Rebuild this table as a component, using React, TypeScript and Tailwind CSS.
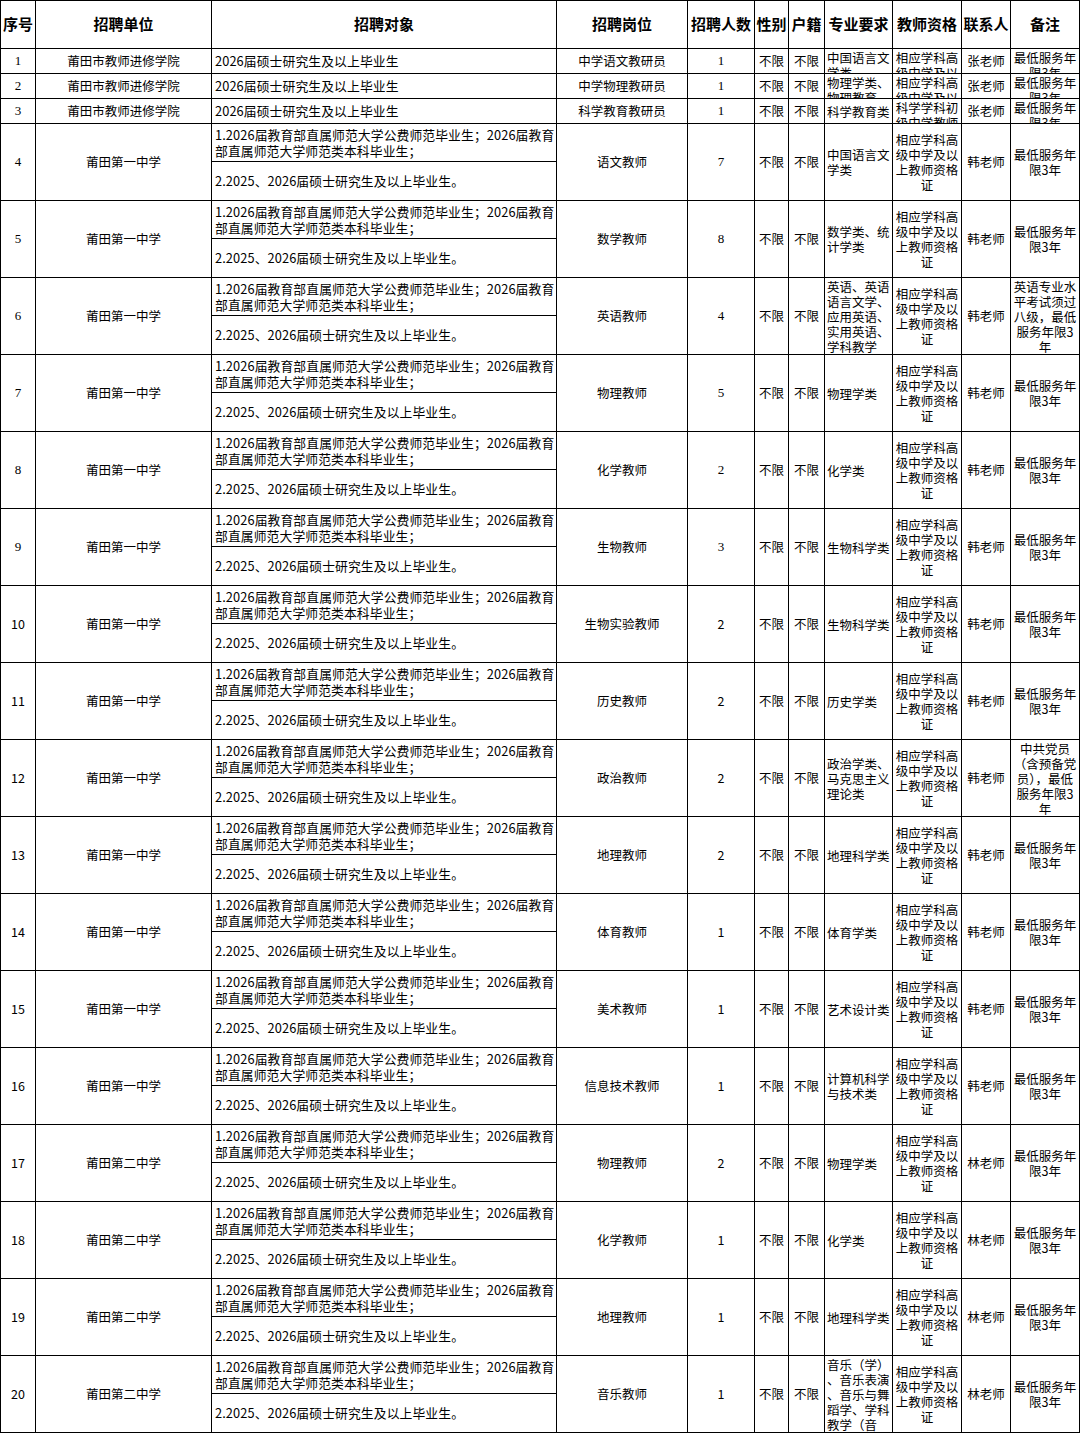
import clsx from 'clsx'

// column template shared by the header and every body row
const COLS =
  'grid grid-cols-[35px_176px_345px_131px_67px_34px_36px_68px_69px_49px_69px]'

interface Row {
  no: number
  unit: string
  target?: string // single-line target; otherwise the two-part text
  pos: string
  num: string
  major: string[]
  qual: string[]
  contact: string
  note: string[]
}

const QUAL = ['相应学科高', '级中学及以', '上教师资格', '证']
const NOTE = ['最低服务年', '限3年']

const rows: Row[] = [
  { no: 1, unit: '莆田市教师进修学院', target: '2026届硕士研究生及以上毕业生', pos: '中学语文教研员', num: '1', major: ['中国语言文', '学类'], qual: QUAL, contact: '张老师', note: NOTE },
  { no: 2, unit: '莆田市教师进修学院', target: '2026届硕士研究生及以上毕业生', pos: '中学物理教研员', num: '1', major: ['物理学类、', '物理教育'], qual: QUAL, contact: '张老师', note: NOTE },
  { no: 3, unit: '莆田市教师进修学院', target: '2026届硕士研究生及以上毕业生', pos: '科学教育教研员', num: '1', major: ['科学教育类'], qual: ['科学学科初', '级中学教师', '资格证'], contact: '张老师', note: NOTE },
  { no: 4, unit: '莆田第一中学', pos: '语文教师', num: '7', major: ['中国语言文', '学类'], qual: QUAL, contact: '韩老师', note: NOTE },
  { no: 5, unit: '莆田第一中学', pos: '数学教师', num: '8', major: ['数学类、统', '计学类'], qual: QUAL, contact: '韩老师', note: NOTE },
  { no: 6, unit: '莆田第一中学', pos: '英语教师', num: '4', major: ['英语、英语', '语言文学、', '应用英语、', '实用英语、', '学科教学'], qual: QUAL, contact: '韩老师', note: ['英语专业水', '平考试须过', '八级，最低', '服务年限3', '年'] },
  { no: 7, unit: '莆田第一中学', pos: '物理教师', num: '5', major: ['物理学类'], qual: QUAL, contact: '韩老师', note: NOTE },
  { no: 8, unit: '莆田第一中学', pos: '化学教师', num: '2', major: ['化学类'], qual: QUAL, contact: '韩老师', note: NOTE },
  { no: 9, unit: '莆田第一中学', pos: '生物教师', num: '3', major: ['生物科学类'], qual: QUAL, contact: '韩老师', note: NOTE },
  { no: 10, unit: '莆田第一中学', pos: '生物实验教师', num: '2', major: ['生物科学类'], qual: QUAL, contact: '韩老师', note: NOTE },
  { no: 11, unit: '莆田第一中学', pos: '历史教师', num: '2', major: ['历史学类'], qual: QUAL, contact: '韩老师', note: NOTE },
  { no: 12, unit: '莆田第一中学', pos: '政治教师', num: '2', major: ['政治学类、', '马克思主义', '理论类'], qual: QUAL, contact: '韩老师', note: ['中共党员', '（含预备党', '员），最低', '服务年限3', '年'] },
  { no: 13, unit: '莆田第一中学', pos: '地理教师', num: '2', major: ['地理科学类'], qual: QUAL, contact: '韩老师', note: NOTE },
  { no: 14, unit: '莆田第一中学', pos: '体育教师', num: '1', major: ['体育学类'], qual: QUAL, contact: '韩老师', note: NOTE },
  { no: 15, unit: '莆田第一中学', pos: '美术教师', num: '1', major: ['艺术设计类'], qual: QUAL, contact: '韩老师', note: NOTE },
  { no: 16, unit: '莆田第一中学', pos: '信息技术教师', num: '1', major: ['计算机科学', '与技术类'], qual: QUAL, contact: '韩老师', note: NOTE },
  { no: 17, unit: '莆田第二中学', pos: '物理教师', num: '2', major: ['物理学类'], qual: QUAL, contact: '林老师', note: NOTE },
  { no: 18, unit: '莆田第二中学', pos: '化学教师', num: '1', major: ['化学类'], qual: QUAL, contact: '林老师', note: NOTE },
  { no: 19, unit: '莆田第二中学', pos: '地理教师', num: '1', major: ['地理科学类'], qual: QUAL, contact: '林老师', note: NOTE },
  { no: 20, unit: '莆田第二中学', pos: '音乐教师', num: '1', major: ['音乐（学）', '、音乐表演', '、音乐与舞', '蹈学、学科', '教学（音', '乐）'], qual: QUAL, contact: '林老师', note: NOTE },
]

const HEAD = ['序号', '招聘单位', '招聘对象', '招聘岗位', '招聘人数', '性别', '户籍', '专业要求', '教师资格', '联系人', '备注']

// plain single-value cell, centered both ways
function Cell({ children, serif }: { children: React.ReactNode; serif?: boolean }) {
  return (
    <div
      className={clsx(
        'flex items-center justify-center overflow-hidden whitespace-nowrap border-r border-b border-black',
        serif && "font-['Liberation_Serif',serif] text-[13px]"
      )}
    >
      {children}
    </div>
  )
}

// wrapped text cell; Excel shows overflowing text from the top
function Lines({ lines, h, center }: { lines: string[]; h: number; center?: boolean }) {
  const over = lines.length * 15 > h - 2
  return (
    <div
      className={clsx(
        'flex flex-col overflow-hidden border-r border-b border-black px-[2px] leading-[15px]',
        over ? 'justify-start pt-[1px]' : 'justify-center',
        center ? 'items-center text-center' : 'items-start text-left'
      )}
    >
      {lines.map((l, i) => (
        <div key={i} className="shrink-0 whitespace-nowrap">
          {l}
        </div>
      ))}
    </div>
  )
}

function Target({ text }: { text?: string }) {
  if (text)
    return (
      <div className="flex items-center overflow-hidden whitespace-nowrap border-r border-b border-black px-[3px] text-[12.8px] tracking-[0.1px]">
        {text}
      </div>
    )
  return (
    <div className="flex flex-col overflow-hidden border-r border-b border-black text-[12.8px] tracking-[0.1px]">
      <div className="flex h-[38px] shrink-0 flex-col justify-center border-b border-black px-[3px] leading-[16px] whitespace-nowrap">
        <div>1.2026届教育部直属师范大学公费师范毕业生；2026届教育</div>
        <div>部直属师范大学师范类本科毕业生；</div>
      </div>
      <div className="flex flex-1 items-center px-[3px] whitespace-nowrap">
        2.2025、2026届硕士研究生及以上毕业生。
      </div>
    </div>
  )
}

export default function App() {
  return (
    <div className="min-h-[1434px] w-[1080px] bg-white text-black font-['Noto_Sans_CJK_SC',sans-serif] text-[12.5px]">
      <div className="border-l border-t border-black">
        {/* Header */}
        <div className={clsx(COLS, 'h-[48px] grid-rows-[48px]')}>
          {HEAD.map((h) => (
            <div
              key={h}
              className="flex items-center justify-center overflow-hidden whitespace-nowrap border-r border-b border-black text-[15px] font-bold"
            >
              {h}
            </div>
          ))}
        </div>

        {/* Body */}
        {rows.map((r) => {
          const short = !!r.target
          const h = short ? 25 : 77
          const serif = r.no < 10
          return (
            <div
              key={r.no}
              className={clsx(COLS, short ? 'h-[25px] grid-rows-[25px]' : 'h-[77px] grid-rows-[77px]')}
            >
              <Cell serif={serif}>{r.no}</Cell>
              <Cell>{r.unit}</Cell>
              <Target text={r.target} />
              <Cell>{r.pos}</Cell>
              <Cell serif={serif}>{r.num}</Cell>
              <Cell>不限</Cell>
              <Cell>不限</Cell>
              <Lines lines={r.major} h={h} />
              <Lines lines={r.qual} h={h} center />
              <Cell>{r.contact}</Cell>
              <Lines lines={r.note} h={h} center />
            </div>
          )
        })}
      </div>
    </div>
  )
}
